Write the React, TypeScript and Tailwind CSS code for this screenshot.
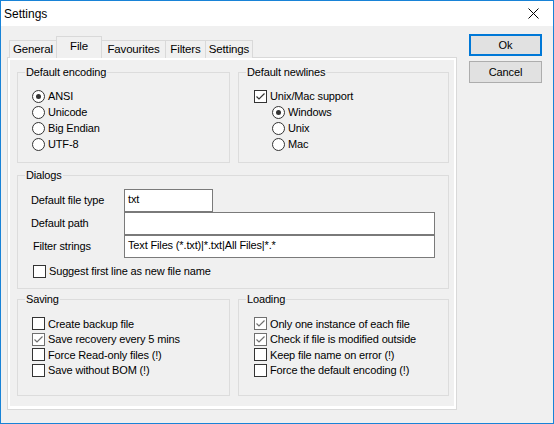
import React from 'react';

const font = "font-['Liberation_Sans',Arial,sans-serif]";

function Radio({ label, checked = false }: { label: string; checked?: boolean }) {
  return (
    <div className="flex items-center h-[16px]">
      <span className="w-[13px] h-[13px] rounded-full border border-[#333333] bg-white flex items-center justify-center shrink-0">
        {checked && <span className="w-[5px] h-[5px] rounded-full bg-[#333333]" />}
      </span>
      <span className="ml-[3px]">{label}</span>
    </div>
  );
}

function Check({ label, checked = false, dim = false, rowClass = 'h-[16px]' }: { label: string; checked?: boolean; dim?: boolean; rowClass?: string }) {
  const tone = checked && dim ? '#707070' : '#333333';
  return (
    <div className={`flex items-center ${rowClass}`}>
      <span
        className={`w-[13px] h-[13px] border bg-white flex items-center justify-center shrink-0 ${
          checked && dim ? 'border-[#707070]' : 'border-[#333333]'
        }`}
      >
        {checked && (
          <svg width="11" height="11" viewBox="0 0 11 11">
            <path d="M1.5 5.5 L4 8 L9.5 2.5" fill="none" stroke={tone} strokeWidth="1.2" />
          </svg>
        )}
      </span>
      <span className="ml-[3px]">{label}</span>
    </div>
  );
}

// group box: padding goes on the inner div so the legend stays near the corner
function Group({ title, className, inner, children }: { title: string; className: string; inner: string; children: React.ReactNode }) {
  return (
    <fieldset className={`border border-[#dcdcdc] ${className}`}>
      <legend className="ml-[7px] px-[1px] h-[13px] leading-[13px]">{title}</legend>
      <div className={inner}>{children}</div>
    </fieldset>
  );
}

function Field({ label, value = '', width, labelClass = '' }: { label: string; value?: string; width: string; labelClass?: string }) {
  return (
    <div className="flex items-center">
      <span className={`w-[93px] shrink-0 ${labelClass}`}>{label}</span>
      <div className={`h-[23px] border border-[#7a7a7a] bg-white pl-[3px] pb-[2px] flex items-center ${width}`}>{value}</div>
    </div>
  );
}

const tabs = [
  { name: 'General', w: 'w-[48px]' },
  { name: 'File', w: 'w-[46px]', active: true },
  { name: 'Favourites', w: 'w-[65px]' },
  { name: 'Filters', w: 'w-[41px]' },
  { name: 'Settings', w: 'w-[48px]' },
];

export default function App() {
  return (
    <div className={`w-[554px] h-[424px] border border-[#1883d7] bg-[#f0f0f0] flex flex-col text-[11px] text-black tracking-[-0.15px] ${font}`}>
      {/* Title bar */}
      <div className="h-[25px] bg-white flex items-center justify-between pl-[3px] pr-[14px] shrink-0">
        <span className="text-[12px] tracking-normal">Settings</span>
        <svg width="11" height="11" viewBox="0 0 11 11">
          <path d="M0.5 0.5 L10.5 10.5 M10.5 0.5 L0.5 10.5" stroke="#000" strokeWidth="1" />
        </svg>
      </div>

      <div className="flex flex-1">
        {/* Tab control */}
        <div className="pl-[6px] pt-[10px]">
          <div className="flex items-end h-[22px] ml-[2px] -mb-px">
            {tabs.map((t, i) => (
              <div
                key={t.name}
                className={`${t.w} ${i > 0 ? '-ml-px' : ''} flex items-center justify-center border border-b-0 text-[11.5px] ${
                  t.active
                    ? 'relative z-10 h-[22px] bg-[#f0f0f0] border-[#d9d9d9] pb-[2px]'
                    : 'h-[18px] bg-[#f0f0f0] border-[#d9d9d9]'
                }`}
              >
                {t.name}
              </div>
            ))}
          </div>
          <div className="w-[450px] h-[353px] border border-[#d9d9d9]">
            <div className="h-full border-2 border-b-[3px] border-white pl-[7px] pt-[6px]">
              <div className="flex gap-[8px]">
                <Group title="Default encoding" className="w-[213px] h-[97px]" inner="pl-[14px] pt-[9px]">
                  <Radio label="ANSI" checked />
                  <Radio label="Unicode" />
                  <Radio label="Big Endian" />
                  <Radio label="UTF-8" />
                </Group>
                <Group title="Default newlines" className="w-[211px] h-[97px]" inner="pl-[15px] pt-[9px]">
                  <Check label="Unix/Mac support" checked />
                  <div className="ml-[18px]">
                    <Radio label="Windows" checked />
                    <Radio label="Unix" />
                    <Radio label="Mac" />
                  </div>
                </Group>
              </div>

              <Group title="Dialogs" className="mt-[6px] w-[432px] h-[120px]" inner="pl-[13px] pt-[7px]">
                <Field label="Default file type" value="txt" width="w-[89px]" />
                <Field label="Default path" width="w-[311px]" />
                <Field label="Filter strings" value="Text Files (*.txt)|*.txt|All Files|*.*" width="w-[311px]" labelClass="pl-[2px]" />
                <div className="mt-[5px] pl-[2px]">
                  <Check label="Suggest first line as new file name" />
                </div>
              </Group>

              <div className="flex gap-[8px] mt-[4px]">
                <Group title="Saving" className="w-[213px] h-[103px]" inner="pl-[14px] pt-[10px]">
                  <Check rowClass="h-[15.5px]" label="Create backup file" />
                  <Check rowClass="h-[15.5px]" label="Save recovery every 5 mins" checked dim />
                  <Check rowClass="h-[15.5px]" label="Force Read-only files (!)" />
                  <Check rowClass="h-[15.5px]" label="Save without BOM (!)" />
                </Group>
                <Group title="Loading" className="w-[211px] h-[103px]" inner="pl-[15px] pt-[10px]">
                  <Check rowClass="h-[15.5px]" label="Only one instance of each file" checked dim />
                  <Check rowClass="h-[15.5px]" label="Check if file is modified outside" checked dim />
                  <Check rowClass="h-[15.5px]" label="Keep file name on error (!)" />
                  <Check rowClass="h-[15.5px]" label="Force the default encoding (!)" />
                </Group>
              </div>
            </div>
          </div>
        </div>

        {/* Buttons */}
        <div className="ml-[12px] pt-[8px] flex flex-col gap-[5px]">
          <button className="w-[73px] h-[22px] border-2 border-[#0078d7] bg-[#e1e1e1] flex items-center justify-center">
            Ok
          </button>
          <button className="w-[73px] h-[22px] border border-[#adadad] bg-[#e1e1e1] flex items-center justify-center">
            Cancel
          </button>
        </div>
      </div>
    </div>
  );
}
